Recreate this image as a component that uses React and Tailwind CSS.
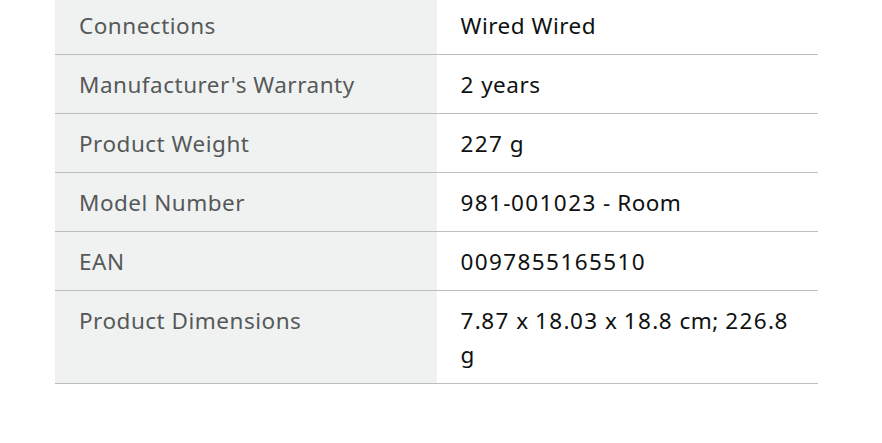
const rows = [
  ["Connections", "Wired Wired"],
  ["Manufacturer's Warranty", "2 years"],
  ["Product Weight", "227 g"],
  ["Model Number", "981-001023 - Room"],
  ["EAN", "0097855165510"],
  ["Product Dimensions", "7.87 x 18.03 x 18.8 cm; 226.8 g"],
]

// digits in the source font run wider than Noto Sans, so space them out a little more
function Spaced({ text }) {
  const parts = text.split(/(\d+)/).filter(Boolean)
  return parts.map((p, i) =>
    /^\d+$/.test(p) ? (
      <span key={i} className="tracking-[1.4px]">{p}</span>
    ) : (
      <span key={i}>{p}</span>
    )
  )
}

export default function App() {
  return (
    <div className="w-[882px] h-[443px] overflow-hidden bg-white font-['Noto_Sans',sans-serif]">
      <div className="ml-[55px] w-[763px] -mt-[4px]">
        {rows.map(([label, value]) => (
          <div key={label} className="flex border-b border-[#bbbfbf]">
            <div className="w-1/2 bg-[#f0f2f2] px-[24px] pt-[13px] pb-[11px] text-[22.5px] leading-[34px] tracking-[0.5px] text-[#565959]">
              {label}
            </div>
            <div className="w-1/2 px-[24px] pt-[13px] pb-[11px] text-[22.5px] leading-[34px] tracking-[0.5px] text-[#0f1111]">
              <Spaced text={value} />
            </div>
          </div>
        ))}
      </div>
    </div>
  )
}
